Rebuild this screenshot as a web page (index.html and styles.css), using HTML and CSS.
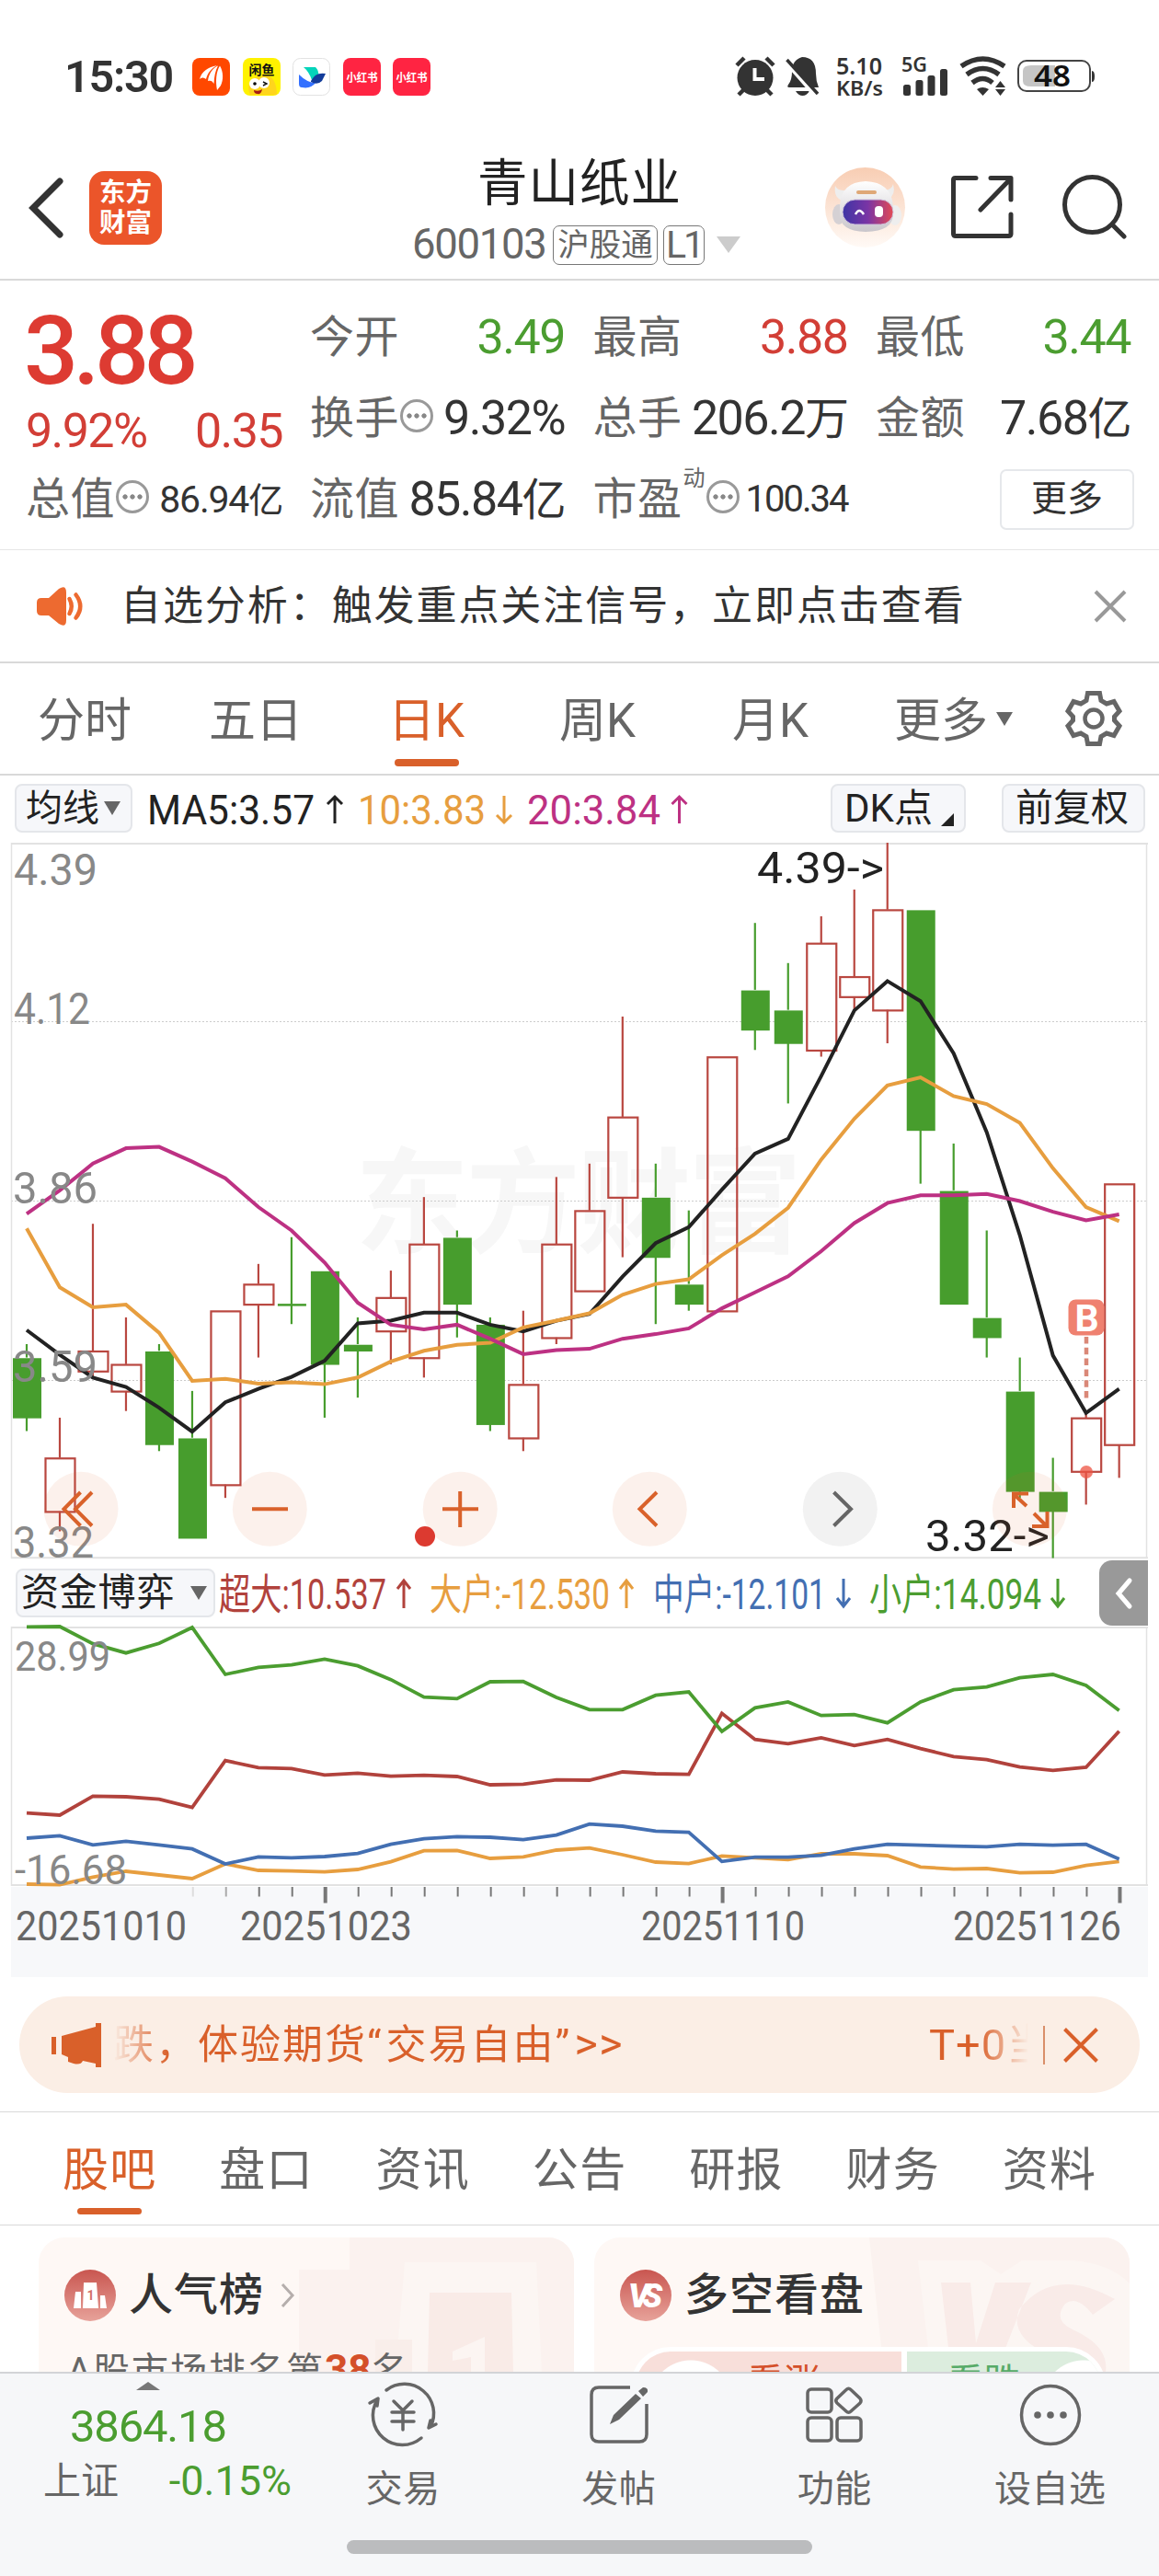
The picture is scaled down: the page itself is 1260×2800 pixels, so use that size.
FILE: index.html
```html
<!DOCTYPE html>
<html lang="zh-CN">
<head>
<meta charset="utf-8">
<title>青山纸业 600103</title>
<link rel="stylesheet" href="styles.css">
</head>
<body>
<div class="phone">

<header class="status">
  <span class="clock">15:30</span>
  <div class="apps">
    <svg class="app" viewBox="0 0 41 41"><rect width="41" height="41" rx="8" fill="#ff4800"/><path d="M8 23C10 15 17 10 27 8C20 12 17 16 15 23C12 21 10 21 8 23ZM17 25C18 17 22 11 28 8.500C25 14 24 20 23.500 28C22 25 20 24 17 25ZM27 35C25 25 26 15 30 8.500C34 15 34 24 31 30Z" fill="#fff"/></svg>
    <svg class="app" viewBox="0 0 41 41"><rect width="41" height="41" rx="8" fill="#fff200"/><path d="M8 40C3 27 10 20 22 20C29 17 37 23 37 40Z" fill="#ffd51d"/><circle cx="13" cy="28" r="6" fill="#fff"/><circle cx="23" cy="27" r="6" fill="#fff"/><circle cx="13" cy="28" r="1.8"/><path d="M22 26l4 2-4 2" fill="none" stroke="#111" stroke-width="1.4"/><path d="M12 35q5 2 9-1q-1 6-5 5q-4 0-4-4Z" fill="#a51b13"/><text x="20.5" y="18" text-anchor="middle" class="app-text" font-size="14" fill="#111">闲鱼</text></svg>
    <svg class="app" viewBox="0 0 41 41"><rect x=".5" y=".5" width="40" height="40" rx="8" fill="#fff" stroke="#e2e2e2"/><path d="M12 10H25Q29 14 28 19L21 24Q18 15 12 10Z" fill="#05d4ba"/><path d="M7 18Q16 27 25 27Q20 34 10 32Q7 32 7 28Z" fill="#3370ff"/><path d="M20 25Q25 15 36 17L32 25Q27 30 20 26Z" fill="#133c9a"/></svg>
    <svg class="app" viewBox="0 0 41 41"><rect width="41" height="41" rx="8" fill="#ff2442"/><text x="3.500" y="26" class="app-text" font-size="12.500" fill="#fff" textLength="34" lengthAdjust="spacingAndGlyphs">小红书</text></svg>
    <svg class="app" viewBox="0 0 41 41"><rect width="41" height="41" rx="8" fill="#ff2442"/><text x="3.500" y="26" class="app-text" font-size="12.500" fill="#fff" textLength="34" lengthAdjust="spacingAndGlyphs">小红书</text></svg>
  </div>
  <svg class="indicators" viewBox="798 60 394 48">
    <g fill="#333">
      <ellipse cx="821" cy="84.500" rx="19.500" ry="19.500"/>
      <path d="M801 71l8-8M841 71l-8-8M803 103l6-6M839 103l-6-6" stroke="#333" stroke-width="4.500"/>
      <path d="M820.500 74V86H831" fill="none" stroke="#fff" stroke-width="4"/>
      <path d="M858 95Q855 95 857 92Q861 87 861 78Q861 65 872 62Q887 62 887 80Q887 88 890 95Z"/>
      <path d="M865 99h15q-3 5-7.500 5t-7.500-5Z"/>
      <path d="M852 65L887 105" stroke="#fff" stroke-width="4"/>
      <path d="M855.500 65L889 102" stroke="#333" stroke-width="3.500"/>
      <rect x="982" y="92" width="8" height="12" rx="2.500"/><rect x="995.500" y="87" width="8" height="17" rx="2.500"/><rect x="1008.500" y="82" width="8" height="22" rx="2.500"/><rect x="1022" y="75" width="8" height="29" rx="2.500"/>
      <path d="M1062 97q6-4 13 0l-6.500 7ZM1082 95l5.500-7 5.500 7ZM1082 97l5.500 7 5.500-7Z"/>
      <path d="M1045 72q23.500-16 47 0M1051 81q17.500-13 35 0M1057 90q11.500-9 22 0" fill="none" stroke="#333" stroke-width="5.500"/>
      <rect x="1107" y="66" width="78" height="33" rx="9" fill="#fff" stroke="#444" stroke-width="2"/>
      <path d="M1121 71H1147V94H1121Q1112 94 1112 88V77Q1112 71 1121 71Z" fill="#c5c5c5"/>
      <path d="M1187 77q3 0 3 6t-3 6Z"/>
    </g>
    <g class="tiny" fill="#333">
      <text x="909" y="80.500" font-size="25" textLength="50" lengthAdjust="spacingAndGlyphs">5.10</text>
      <text x="909" y="104" font-size="22" textLength="51" lengthAdjust="spacingAndGlyphs">KB/s</text>
      <text x="980" y="78" font-size="21" textLength="28" lengthAdjust="spacingAndGlyphs">5G</text>
      <text x="1124" y="93.500" font-size="32" textLength="40" lengthAdjust="spacingAndGlyphs" fill="#111">48</text>
    </g>
  </svg>
</header>

<nav class="nav">
  <svg class="back" viewBox="0 0 38 66"><path d="M34 4L5 33L34 62" fill="none" stroke="#333" stroke-width="7" stroke-linecap="round"/></svg>
  <div class="logo"><span>东方</span><span>财富</span></div>
  <div class="title">
    <h1>青山纸业</h1>
    <div class="code"><span class="num">600103</span><span class="tag hgt">沪股通</span><span class="tag l1">L1</span><svg width="26" height="18" viewBox="0 0 26 18"><path d="M0 0H26L13 18Z" fill="#ccc"/></svg></div>
  </div>
  <svg class="robot" viewBox="0 0 87 87">
    <defs><linearGradient id="halo" x2="0" y2="1"><stop stop-color="#f8cdb3"/><stop offset="1" stop-color="#fffaf6"/></linearGradient><linearGradient id="visor"><stop stop-color="#3e35a5"/><stop offset=".5" stop-color="#7a35a5"/><stop offset="1" stop-color="#e24a55"/></linearGradient><linearGradient id="shell" x2="0" y2="1"><stop stop-color="#fff"/><stop offset="1" stop-color="#c9c6cb"/></linearGradient></defs>
    <circle cx="43.500" cy="43.500" r="43.500" fill="url(#halo)"/>
    <path d="M11 20Q9 33 19 36L26 24Q14 27 11 20ZM74 18Q77 30 69 34L62 24Q72 26 74 18Z" fill="#eee"/>
    <ellipse cx="15" cy="51" rx="7" ry="11" fill="#d5d1d4"/><ellipse cx="76" cy="52" rx="7" ry="11" fill="#eee"/>
    <path d="M16 42Q17 16 44 15Q72 16 74 42V50Q75 69 44 70Q15 69 16 50Z" fill="url(#shell)"/>
    <rect x="34" y="25" width="22" height="4" rx="2" fill="#dfa877"/>
    <rect x="19" y="35" width="55" height="27" rx="13.500" fill="url(#visor)" stroke="#cfc4dd"/>
    <path d="M33 51q4-8 9 0" fill="none" stroke="#fff" stroke-width="2.500"/><rect x="54" y="42" width="9" height="12" rx="4" fill="#fff"/>
  </svg>
  <svg class="share" viewBox="0 0 68 68"><path d="M27 2.500H4.500Q2.500 2.500 2.500 4.500V63Q2.500 65.500 5 65.500H62.500Q65 65.500 65 63V42M43 2.500H65V26M64 4L32 37" fill="none" stroke="#333" stroke-width="5" stroke-linecap="round" stroke-linejoin="round"/></svg>
  <svg class="search" viewBox="0 0 70 70"><circle cx="32.500" cy="32.500" r="30" fill="none" stroke="#333" stroke-width="5"/><path d="M54 54L67 67" stroke="#333" stroke-width="5" stroke-linecap="round"/></svg>
</nav>

<section class="quote">
  <div class="main-col">
    <div class="price">3.88</div>
    <div class="change"><span>9.92%</span><span>0.35</span></div>
    <div class="cell small"><b>总值</b><i class="info"></i><em>86.94<s>亿</s></em></div>
  </div>
  <div class="grid">
    <div class="cell"><b>今开</b><em class="down">3.49</em></div>
    <div class="cell"><b>最高</b><em class="up">3.88</em></div>
    <div class="cell"><b>最低</b><em class="down">3.44</em></div>
    <div class="cell"><b>换手</b><i class="info"></i><em>9.32%</em></div>
    <div class="cell"><b>总手</b><em>206.2<s>万</s></em></div>
    <div class="cell"><b>金额</b><em>7.68<s>亿</s></em></div>
    <div class="cell"><b>流值</b><em>85.84<s>亿</s></em></div>
    <div class="cell small pe"><b>市盈</b><sup>动</sup><i class="info"></i><em>100.34</em></div>
    <div class="cell"><button class="more">更多</button></div>
  </div>
</section>

<section class="notice">
  <svg class="speaker" viewBox="0 0 51 42"><path d="M5 12H13L24 2Q32-3 32 6V36Q32 45 24 40L13 31H5Q0 31 0 26V17Q0 12 5 12Z" fill="#ed6a30"/><path d="M35.500 13Q40 21 35.500 29M42.500 8.500Q52 21 42.500 33.500" fill="none" stroke="#ed6a30" stroke-width="4.500" stroke-linecap="round"/></svg>
  <p>自选分析：触发重点关注信号，立即点击查看</p>
  <svg class="close" viewBox="0 0 34 34"><path d="M1 1L33 33M33 1L1 33" stroke="#999" stroke-width="4"/></svg>
</section>

<nav class="periods">
  <a>分时</a><a>五日</a><a class="on">日K</a><a>周K</a><a>月K</a><a>更多<svg width="18" height="15" viewBox="0 0 18 15"><path d="M0 0H18L9 15Z" fill="#666"/></svg></a>
  <svg class="gear" viewBox="0 0 60 60"><path d="M23.500 2.500H36.500L38 10.500L44 14L52 11.500L58 22L52.500 28V32L58 38L52 48.500L44 46L38 49.500L36.500 57.500H23.500L22 49.500L16 46L8 48.500L2 38L7.500 32V28L2 22L8 11.500L16 14L22 10.500Z" fill="none" stroke="#666" stroke-width="5"/><circle cx="30" cy="30" r="9.500" fill="none" stroke="#666" stroke-width="4.500"/></svg>
</nav>

<section class="ma-row">
  <button class="chip avg">均线<svg width="18" height="15" viewBox="0 0 18 15"><path d="M0 0H18L9 15Z" fill="#666"/></svg></button>
  <svg class="ma-values" viewBox="160 843 600 73">
    <g class="num" font-size="44.500">
      <text x="160" y="896" textLength="182" fill="#222" lengthAdjust="spacingAndGlyphs">MA5:3.57</text>
      <text x="389" y="896" textLength="139" fill="#e79e3f" lengthAdjust="spacingAndGlyphs">10:3.83</text>
      <text x="573" y="896" textLength="145" fill="#bd3183" lengthAdjust="spacingAndGlyphs">20:3.84</text>
    </g>
    <g fill="none" stroke-width="3">
      <path d="M364 895V866M356 874l8-8 8 8" stroke="#222"/>
      <path d="M548 865V894M540 886l8 8 8-8" stroke="#e79e3f"/>
      <path d="M738.500 895V866M730.500 874l8-8 8 8" stroke="#bd3183"/>
    </g>
  </svg>
  <button class="chip dk">DK点<svg width="14" height="14" viewBox="0 0 14 14"><path d="M14 0V14H0Z" fill="#222"/></svg></button>
  <button class="chip fq">前复权</button>
</section>

<svg class="kline" viewBox="0 916 1260 778">
  <text x="386" y="1352" class="mark" font-size="124" textLength="486">东方财富</text>
  <g class="gridlines"><path d="M12 1110.500H1247M12 1305.500H1247M12 1500.500H1247"/></g>
  <path d="M12.500 916V1694M1246.500 916V1694" stroke="#e2e2e2" stroke-width="1.500"/>
  <path d="M12 917H1248M12 1693.300H1248" stroke="#e2e2e2" stroke-width="2"/>
  <g id="candles"></g>
  <g id="averages" fill="none" stroke-width="4"></g>
  <g class="num axis" font-size="49">
    <text x="15" y="962" textLength="91" lengthAdjust="spacingAndGlyphs">4.39</text>
    <text x="15" y="1112.500" textLength="83" lengthAdjust="spacingAndGlyphs">4.12</text>
    <text x="14" y="1307.500" textLength="92" lengthAdjust="spacingAndGlyphs">3.86</text>
    <text x="14" y="1501.500" textLength="92" lengthAdjust="spacingAndGlyphs">3.59</text>
    <text x="14" y="1692.500" textLength="88" lengthAdjust="spacingAndGlyphs">3.32</text>
  </g>
  <g class="num" font-size="48" fill="#222">
    <text x="823" y="959.500" textLength="138" lengthAdjust="spacingAndGlyphs">4.39-&gt;</text>
    <text x="1006" y="1686" textLength="135" lengthAdjust="spacingAndGlyphs">3.32-&gt;</text>
  </g>
  <rect x="1161.500" y="1412.500" width="39" height="39" rx="8" fill="#ef8170"/>
  <text x="1181.500" y="1447" text-anchor="middle" class="num" font-size="41" font-weight="700" fill="#fff">B</text>
  <path d="M1181 1453V1521" stroke="#da8878" stroke-width="4.500" stroke-dasharray="7.500 4.300"/>
  <circle cx="1181" cy="1600" r="7" fill="#ed5341" fill-opacity=".75"/>
  <g fill="#d9622b" fill-opacity=".09"><circle cx="88" cy="1640.300" r="40.500"/><circle cx="293.300" cy="1640.300" r="40.500"/><circle cx="500.200" cy="1640.300" r="40.500"/><circle cx="706.300" cy="1640.300" r="40.500"/><circle cx="1119.400" cy="1640.300" r="40.500"/></g>
  <circle cx="913.300" cy="1640.300" r="40.500" fill="#f2f2f2"/>
  <g fill="none" stroke="#d9622b" stroke-width="4">
    <path d="M87.500 1622L69.500 1640.300L87.500 1658.500M100 1622L82 1640.300L100 1658.500M274 1640.300H313M481 1640.300H520M500.200 1621V1660M714 1622L695.500 1640.300L714 1658.500"/>
    <path d="M1102 1639V1623.500H1118M1103 1625L1116 1637M1122 1659H1138.500V1643M1137 1658L1124 1645"/>
  </g>
  <path d="M906.500 1622L925 1640.300L906.500 1658.500" fill="none" stroke="#666" stroke-width="4"/>
  <circle cx="462" cy="1670" r="11" fill="#dc3a30"/>
</svg>

<section class="flow-row">
  <button class="chip game">资金博弈<svg width="18" height="15" viewBox="0 0 18 15"><path d="M0 0H18L9 15Z" fill="#666"/></svg></button>
  <svg class="flow-values" viewBox="236 1694 930 74">
    <g class="num" font-size="46">
      <text x="238" y="1748.500" textLength="182" lengthAdjust="spacingAndGlyphs" fill="#b1423c">超大:10.537</text>
      <text x="467" y="1748.500" textLength="196" lengthAdjust="spacingAndGlyphs" fill="#e79e3f">大户:-12.530</text>
      <text x="710" y="1748.500" textLength="188" lengthAdjust="spacingAndGlyphs" fill="#436fb2">中户:-12.101</text>
      <text x="945" y="1748.500" textLength="187" lengthAdjust="spacingAndGlyphs" fill="#4b9d30">小户:14.094</text>
    </g>
    <g fill="none" stroke-width="3">
      <path d="M439 1748V1718M432 1727l7-9 7 9" stroke="#b1423c"/>
      <path d="M681 1748V1718M674 1727l7-9 7 9" stroke="#e79e3f"/>
      <path d="M917 1716V1746M910 1737l7 9 7-9" stroke="#436fb2"/>
      <path d="M1150 1716V1746M1143 1737l7 9 7-9" stroke="#4b9d30"/>
    </g>
  </svg>
  <div class="collapse"><svg width="18" height="34" viewBox="0 0 18 34"><path d="M15 3L3 17L15 31" fill="none" stroke="#fff" stroke-width="5" stroke-linecap="round"/></svg></div>
</section>

<svg class="flow" viewBox="0 1768 1260 381">
  <rect x="12" y="2051" width="1236" height="98" fill="#f7f8fa"/>
  <path d="M12.500 1768V2050M1246.500 1768V2050" stroke="#e2e2e2" stroke-width="1.500"/>
  <path d="M12 1769H1248M12 2049H1248" stroke="#e2e2e2" stroke-width="2"/>
  <g id="ticks"></g>
  <g id="flows" fill="none" stroke-width="3.800"></g>
  <g class="num axis" font-size="45">
    <text x="16" y="1815.500" textLength="104" lengthAdjust="spacingAndGlyphs">28.99</text>
    <text x="16" y="2048" textLength="122" lengthAdjust="spacingAndGlyphs">-16.68</text>
  </g>
  <g class="num" font-size="45" fill="#666">
    <text x="17" y="2108.500" textLength="186" lengthAdjust="spacingAndGlyphs">20251010</text>
    <text x="261" y="2108.500" textLength="187" lengthAdjust="spacingAndGlyphs">20251023</text>
    <text x="697" y="2108.500" textLength="178" lengthAdjust="spacingAndGlyphs">20251110</text>
    <text x="1036" y="2108.500" textLength="183" lengthAdjust="spacingAndGlyphs">20251126</text>
  </g>
</svg>

<section class="banner">
  <svg class="horn" viewBox="0 0 54 48"><path d="M0 15H5V34H0ZM11 14L48 4V0H54V48H48V44L34 41Q32 46 24 44L18 42V37L11 34Z" fill="#d9602a"/></svg>
  <p class="ticker">跌，体验期货<q>“</q>交易自由<q>”</q><span class="go">&gt;&gt;</span></p>
  <p class="next">T+0当</p>
  <span class="bar"></span>
  <svg class="x" viewBox="0 0 38 38"><path d="M1.500 1.500L36.500 36.500M36.500 1.500L1.500 36.500" stroke="#d9602a" stroke-width="4"/></svg>
</section>

<nav class="subtabs"><a class="on">股吧</a><a>盘口</a><a>资讯</a><a>公告</a><a>研报</a><a>财务</a><a>资料</a></nav>

<section class="cards">
  <article class="card">
    <svg class="deco" viewBox="0 0 582 146"><path d="M283 35H338V0H582V146H283Z" fill="#fbf2ef"/><path d="M398 27H541L547 146H388Z" fill="#fcf6f3"/><path d="M425 60H514L516 146H423Z" fill="#f9ebe7"/><path d="M450 124L485 108V146H470V130L450 134Z" fill="#fcf5f2"/><path d="M366 111H406V146H366Z" fill="#f9eeea"/></svg>
    <header>
      <svg class="badge" viewBox="0 0 56 56"><defs><linearGradient id="rd" x2="0" y2="1"><stop stop-color="#c95650"/><stop offset="1" stop-color="#e7a29a"/></linearGradient></defs><circle cx="28" cy="28" r="28" fill="url(#rd)"/><path d="M12 24H18V42H10ZM21 14H35L37 42H20ZM39 28H44L46 42H39Z" fill="#fff"/><text x="28.500" y="33" text-anchor="middle" class="num" font-size="14" font-weight="700" fill="#d3716a">1</text></svg>
      <h2>人气榜</h2>
      <svg width="16" height="28" viewBox="0 0 16 28"><path d="M2 2L13 14L2 26" fill="none" stroke="#b5aeac" stroke-width="3"/></svg>
    </header>
    <p class="rank">A股市场排名第<strong>38</strong>名</p>
  </article>
  <article class="card">
    <svg class="deco" viewBox="0 0 582 146"><path d="M299 0H582V146H315Z" fill="#fbf2ef"/><path d="M352 25H420L442 40L465 25H520Q560 28 582 50V146H366Z" fill="#fcf6f3"/><path d="M377 49H409L415 115L436 49H475L437 146H388ZM566 67Q500 30 462 78Q450 110 500 130L520 146H556Q560 118 520 100Q498 90 512 72Q525 62 542 84Z" fill="#f9ebe8"/></svg>
    <header>
      <svg class="badge" viewBox="0 0 56 56"><circle cx="28" cy="28" r="28" fill="url(#rd)"/><text x="9" y="41" class="num vs" font-size="36" fill="#fff" textLength="37">VS</text></svg>
      <h2>多空看盘</h2>
    </header>
    <div class="vote"><span class="bull">看涨</span><span class="bear">看跌</span></div>
  </article>
</section>

<footer class="dock">
  <div class="index">
    <svg class="caret" width="26" height="9" viewBox="0 0 26 9"><path d="M0 9L13 0L26 9Z" fill="#777"/></svg>
    <div class="points">3864.18</div>
    <div class="sub"><span>上证</span><em>-0.15%</em></div>
  </div>
  <a><svg width="76" height="70" viewBox="0 0 76 70"><g fill="none" stroke="#666" stroke-width="3.500" stroke-linecap="round" stroke-linejoin="round"><path d="M20 8A32 32 0 0 1 68 48M74 45L66 49L68 41M58 60A32 32 0 0 1 10 19M2 22L11 17L10 25"/><path d="M28 20L38 30L48 20M38 30V51M26 32H50M26 42H50"/></g></svg>交易</a>
  <a><svg width="64" height="66" viewBox="0 0 64 66"><path d="M44 3H10Q2 3 2 11V54Q2 62 10 62H54Q62 62 62 54V21" fill="none" stroke="#666" stroke-width="3.500"/><path d="M22 43L26 33L50 10L56 15L32 38ZM53 7L58 3Q64 3 63 8L58 13Z" fill="#666"/></svg>发帖</a>
  <a><svg width="62" height="64" viewBox="0 0 62 64"><g fill="none" stroke="#666" stroke-width="3.500"><rect x="2" y="4" width="26" height="25" rx="4"/><rect x="2" y="35" width="26" height="25" rx="4"/><rect x="34" y="35" width="26" height="25" rx="4"/><path d="M44 4.500Q46.500 2 49 4.500L59 14Q61 16.500 59 19L49 28Q46.500 30.500 44 28L34 19Q31.500 16.500 34 14Z"/></g></svg>功能</a>
  <a><svg width="68" height="68" viewBox="0 0 68 68"><circle cx="34" cy="34" r="31.500" fill="none" stroke="#666" stroke-width="3.500"/><g fill="#666"><circle cx="20" cy="34" r="3.800"/><circle cx="34" cy="34" r="3.800"/><circle cx="48" cy="34" r="3.800"/></g></svg>设自选</a>
  <div class="home"></div>
</footer>

</div>
<script src="chart.js"></script>
</body>
</html>
```
FILE: styles.css
```css
* { box-sizing: border-box; }
body { margin: 0; background: #fff; }
.phone { width: 1260px; height: 2800px; overflow: hidden; display: flex; flex-direction: column; font-family: Roboto, "Noto Sans CJK SC", sans-serif; color: #333; line-height: 1; }
.phone > * { flex: none; }
svg { display: block; overflow: visible; }
p, h1, h2 { margin: 0; font-weight: 400; }
button { font: inherit; color: inherit; padding: 0; margin: 0; }
.num { font-family: Roboto, "Noto Sans CJK SC", sans-serif; }
.up { color: #d23e36; }
.down { color: #4b9d30; }

.status { height: 130px; padding: 60px 68px 0 70px; display: flex; align-items: flex-start; }
.clock { width: 139px; font-size: 48.500px; line-height: 48px; font-weight: 600; letter-spacing: -1.200px; white-space: nowrap; }
.apps { display: flex; gap: 13.600px; padding-top: 2.500px; width: 589px; }
.app { width: 41px; height: 41px; }
.app-text { font-family: "Noto Sans CJK SC", sans-serif; font-weight: 700; }
.indicators { width: 394px; height: 48px; flex: none; }
.tiny { font-family: "Noto Sans", sans-serif; font-weight: 600; }

.nav { height: 175px; border-bottom: 2px solid #d9d9d9; display: flex; align-items: flex-start; padding-left: 31px; }
.back { width: 38px; height: 66px; margin-top: 63px; }
.logo { width: 79px; height: 80px; margin: 56px 0 0 28px; border-radius: 16px; background: #eb552a; color: #fff; display: flex; flex-direction: column; align-items: center; justify-content: center; font-size: 28.500px; line-height: 33px; font-weight: 700; }
.title { width: 449px; margin-left: 239px; }
.title h1 { font-size: 54.500px; line-height: 60px; margin: 39px 0 0 104px; letter-spacing: 1px; color: #222; }
.code { display: flex; align-items: center; margin: 15px 0 0 33px; height: 44px; color: #666; font-size: 45.500px; }
.code .num { width: 153px; letter-spacing: -1.300px; }
.tag { height: 43px; border: 1.500px solid #777; border-radius: 7px; display: flex; align-items: center; justify-content: center; font-size: 34.500px; color: #666; }
.hgt { width: 114px; margin-right: 6px; }
.l1 { width: 45px; margin-right: 13px; font-size: 41px; letter-spacing: -3px; }
.robot { width: 87px; height: 87px; margin: 52px 0 0 33px; }
.share { width: 68px; height: 68px; margin: 61px 0 0 50px; }
.search { width: 70px; height: 70px; margin: 60px 0 0 53px; }

.quote { height: 293px; border-bottom: 1.500px solid #e6e6e6; display: flex; padding-left: 28px; }
.main-col { width: 279px; margin-right: 30px; }
.price { color: #dd3b32; font-size: 104px; font-weight: 500; line-height: 100px; height: 100px; margin: 27px 0 0 -2px; letter-spacing: -5.500px; }
.change { display: flex; justify-content: space-between; color: #d23e36; font-size: 52px; line-height: 60px; margin-top: 7px; letter-spacing: -1.600px; }
.grid { width: 892px; display: grid; grid-template-columns: repeat(3, 277px); column-gap: 30.500px; grid-template-rows: repeat(3, 88px); padding-top: 18px; }
.cell { display: flex; align-items: center; height: 88px; }
.cell b { font-weight: 400; font-size: 48px; color: #666; letter-spacing: 0.500px; line-height: 60px; white-space: nowrap; }
.cell em { font-style: normal; margin-left: auto; font-size: 52px; line-height: 60px; letter-spacing: -1.500px; white-space: nowrap; }
.cell s { text-decoration: none; font-size: 48px; }
.small em { font-size: 41px; letter-spacing: -1.200px; }
.small s { font-size: 38px; }
.pe em { font-size: 40px; letter-spacing: -2px; }
.cell sup { font-size: 24px; align-self: flex-start; color: #666; line-height: 24px; margin: 9px 0 0 1px; }
.info { width: 36px; height: 36px; border: 3px solid #999; border-radius: 50%; flex: none; margin-left: 1px; margin-top: -6px; display: block; background: radial-gradient(circle at 7px 15px, #888 2.300px, transparent 3px), radial-gradient(circle at 15px 15px, #888 2.300px, transparent 3px), radial-gradient(circle at 23px 15px, #888 2.300px, transparent 3px); }
.more { width: 146px; height: 66px; border: 2px solid #e6e8eb; border-radius: 7px; background: #fff; margin: -1px 0 0 135px; flex: none; font-size: 39px; color: #333; }

.notice { height: 123px; border-bottom: 2px solid #d9d9d9; display: flex; align-items: center; padding-left: 40px; }
.speaker { width: 51px; height: 42px; }
.notice p { width: 1059px; margin-left: 40px; font-size: 44px; letter-spacing: 1.930px; line-height: 60px; white-space: nowrap; }
.close { width: 34px; height: 34px; }

.periods { height: 122px; border-bottom: 2px solid #d9d9d9; display: grid; grid-template-columns: 186px 186px 186px 186px 186px 190px 60px; padding: 0 0 0 41px; color: #666; font-size: 51px; line-height: 126px; }
.periods a { white-space: nowrap; height: 120px; }
.periods a:nth-child(3) { padding-left: 9px; }
.periods a:nth-child(4) { padding-left: 9px; }
.periods a:nth-child(5) { padding-left: 11px; }
.periods a:nth-child(6) { padding-left: 1px; display: flex; gap: 9px; }
.periods a svg { margin-top: 53px; }
.periods .on { color: #d9602a; position: relative; }
.periods .on::after { content: ""; position: absolute; left: 16px; top: 104px; width: 70px; height: 8px; border-radius: 4px; background: #d9602a; }
.gear { width: 60px; height: 60px; margin: 30px 0 0 -2px; }

.ma-row { height: 73px; display: flex; align-items: flex-start; padding: 9px 0 0 16px; }
.chip { background: #f6f7fa; border: 2px solid #e4e6ea; border-radius: 8px; height: 53px; font-size: 41px; line-height: 49px; color: #222; display: flex; align-items: center; flex: none; white-space: nowrap; }
.avg { width: 128px; padding-left: 10px; gap: 5px; font-size: 40px; }
.ma-values { width: 600px; height: 73px; margin: -9px 143px 0 16px; flex: none; }
.dk { width: 147px; padding-left: 13px; gap: 9px; font-size: 42px; }
.dk svg { align-self: flex-end; margin-bottom: 5px; }
.fq { width: 156px; margin-left: 39px; padding-left: 13px; }

.kline { width: 1260px; height: 778px; }
.mark { font-family: "Noto Sans CJK SC", sans-serif; font-weight: 700; fill: #f7f7f7; }
.gridlines { stroke: #ccc; stroke-width: 1; stroke-dasharray: 2 2; }
.axis { fill: #888; }

.flow-row { height: 74px; display: flex; padding: 11px 0 0 17px; }
.game { width: 217px; padding-left: 4px; gap: 17px; letter-spacing: 0.800px; }
.flow-values { width: 930px; height: 74px; margin: -11px 0 0 2px; flex: none; }
.collapse { width: 53px; height: 71px; margin: -9px 0 0 29px; border-radius: 14px 0 0 14px; background: #999; display: flex; align-items: center; justify-content: center; }
.flow { width: 1260px; height: 381px; }

.banner { margin: 21px 21px 20px; height: 105px; border-radius: 53px; background: #fbeee5; display: flex; align-items: center; padding-left: 35px; color: #d9602a; font-size: 44px; line-height: 60px; }
.horn { width: 54px; height: 48px; }
.ticker { width: 875px; margin-left: 13px; letter-spacing: 2px; white-space: nowrap; background: linear-gradient(90deg, rgba(217,96,42,0), #d9602a 60px); -webkit-background-clip: text; background-clip: text; color: transparent; }
.ticker q { quotes: none; letter-spacing: 5px; }
.go { font-size: 49px; letter-spacing: 1px; }
.next { width: 108px; margin-left: 12px; font-size: 47px; letter-spacing: 1px; white-space: nowrap; overflow: hidden; background: linear-gradient(90deg, #d9602a 50%, rgba(217,96,42,0)); -webkit-background-clip: text; background-clip: text; color: transparent; }
.bar { width: 2px; height: 42px; background: #d98f6a; margin: 0 20px 0 16px; }
.x { width: 38px; height: 38px; }

.subtabs { height: 124px; border-top: 1.500px solid #d9d9d9; border-bottom: 1.500px solid #d9d9d9; display: flex; padding-left: 68px; font-size: 50px; color: #666; line-height: 127px; letter-spacing: 1.300px; }
.subtabs a { width: 170.500px; height: 122px; position: relative; }
.subtabs .on { color: #d9602a; }
.subtabs .on::after { content: ""; position: absolute; left: 15.500px; top: 104px; width: 70px; height: 7px; border-radius: 4px; background: #d9602a; }

.cards { height: 159px; padding: 13px 0 0 42px; display: flex; gap: 22px; overflow: hidden; }
.card { width: 582px; height: 320px; border-radius: 28px; background: #fef8f5; overflow: hidden; position: relative; }
.deco { position: absolute; left: 0; top: 0; width: 582px; height: 146px; }
.card header { position: relative; display: flex; align-items: center; height: 56px; margin: 35px 0 0 28px; }
.badge { width: 56px; height: 56px; margin-right: 14px; }
.card h2 { font-size: 48px; font-weight: 500; letter-spacing: 1px; line-height: 60px; margin-right: 18px; white-space: nowrap; }
.vs { font-weight: 900; font-style: italic; }
.rank { position: relative; margin: 23px 0 0 31px; font-size: 40px; line-height: 60px; letter-spacing: 2px; color: #666; white-space: nowrap; }
.rank strong { color: #d4502a; font-size: 44px; letter-spacing: 0; }
.vote { position: relative; width: 516px; height: 86px; margin: 28px 0 0 40px; border: 5px solid #fff; border-radius: 45px; display: flex; gap: 6px; overflow: hidden; background: #fff; font-size: 40px; line-height: 60px; }
.bull { flex: 1; padding: 4px 0 0 121px; color: #d4502a; background: radial-gradient(circle at 60px 54px, #fff 44px, transparent 45px) #f8dfda; }
.bear { flex: 1; padding: 4px 0 0 44px; color: #57ab68; background: radial-gradient(circle at 192px 54px, #fff 44px, transparent 45px) #dcedde; }

.dock { height: 222px; background: #f6f7f9; border-top: 2px solid #d2d4d7; display: grid; grid-template-columns: 321px 234.500px 234.500px 234.500px 234.500px; position: relative; color: #666; font-size: 40px; }
.dock a { display: flex; flex-direction: column; align-items: center; line-height: 48px; letter-spacing: 0.500px; white-space: nowrap; }
.dock a svg { height: 70px; margin: 10px 0 22px; }
.index { padding-left: 47px; }
.caret { margin: 9px 0 0 101px; }
.points { color: #4b9d30; font-size: 49px; line-height: 52px; margin: 14px 0 0 29px; letter-spacing: -1.200px; }
.sub { display: flex; justify-content: space-between; width: 270px; font-size: 41px; line-height: 52px; margin-top: 7px; }
.sub em { font-style: normal; color: #4b9d30; font-size: 45px; letter-spacing: 0; }
.home { position: absolute; left: 377px; top: 181px; width: 506px; height: 15px; border-radius: 8px; background: #bbbcbe; }
```
FILE: chart.js
```js
const NS = 'http://www.w3.org/2000/svg';
const N = 34;
const x = i => 29 + i * 35.99;
const y = p => 916 + (4.39 - p) * 726.7;

function add(parent, tag, attrs) {
  const el = document.createElementNS(NS, tag);
  for (const k in attrs) el.setAttribute(k, attrs[k]);
  document.getElementById(parent).appendChild(el);
}

// [rising, body top, body bottom, high, low]
const days = [
  [0,3.62,3.53,3.64,3.51],[1,3.47,3.39,3.53,3.36],[1,3.63,3.60,3.82,3.59],[1,3.61,3.57,3.68,3.54],
  [0,3.63,3.49,3.64,3.48],[0,3.50,3.35,3.57,3.35],[1,3.69,3.43,3.69,3.41],[1,3.73,3.70,3.76,3.62],
  [0,3.70,3.70,3.80,3.67],[0,3.75,3.61,3.75,3.53],[0,3.64,3.63,3.68,3.56],[1,3.71,3.66,3.75,3.61],
  [1,3.79,3.62,3.86,3.59],[0,3.80,3.70,3.81,3.65],[0,3.67,3.52,3.68,3.51],[1,3.58,3.50,3.69,3.48],
  [1,3.79,3.65,3.89,3.64],[1,3.84,3.72,3.91,3.72],[1,3.98,3.86,4.13,3.77],[0,3.86,3.77,3.91,3.67],
  [0,3.73,3.70,3.84,3.69],[1,4.07,3.69,4.07,3.69],[0,4.17,4.11,4.27,4.08],[0,4.14,4.09,4.21,4.00],
  [1,4.24,4.08,4.28,4.07],[1,4.19,4.16,4.32,4.14],[1,4.29,4.14,4.39,4.09],[0,4.29,3.96,4.29,3.88],
  [0,3.87,3.70,3.94,3.70],[0,3.68,3.65,3.81,3.62],[0,3.57,3.42,3.62,3.41],[0,3.42,3.39,3.47,3.32],
  [1,3.53,3.45,3.54,3.40],[1,3.88,3.49,3.88,3.44]
];

days.forEach(([rise, top, bottom, high, low], i) => {
  const cx = x(i), color = rise ? '#b94740' : '#479d2d';
  const line = (a, b) => add('candles', 'path', { d: `M${cx} ${y(a)}V${y(b)}`, stroke: color, 'stroke-width': 2.2 });
  line(high, top);
  line(bottom, low);
  if (rise) {
    add('candles', 'rect', { x: cx - 15.5, y: y(top) + 0.7, width: 32, height: y(bottom) - y(top), fill: 'none', stroke: color, 'stroke-width': 2.2 });
  } else {
    add('candles', 'rect', { x: cx - 15, y: y(top) - (top === bottom ? 1 : 0) + 0.7, width: 31, height: Math.max(2.5, y(bottom) - y(top)), fill: color });
  }
});

const closes = days.map(d => d[0] ? d[1] : d[2]);
function average(span, lead, color) {
  const pts = closes.map((_, i) => {
    const v = i < lead.length ? lead[i] : closes.slice(i - span + 1, i + 1).reduce((a, b) => a + b) / span;
    return x(i) + ',' + (y(v) + 0.7);
  });
  add('averages', 'polyline', { points: pts.join(' '), stroke: color });
}
average(5, [3.662,3.625,3.591,3.577], '#222');
average(10, [3.814,3.726,3.696,3.700,3.658,3.586,3.589,3.582,3.584], '#e79e3f');
average(20, [3.836,3.871,3.911,3.934,3.936,3.914,3.889,3.846,3.811,3.763,3.703,3.670,3.663,3.670,3.649,3.626,3.632,3.634,3.649], '#bd3183');

// fund flow series, in thirds of a pixel below y = 1690
const flows = {
  '#e79e3f': [1074,1076,1051,1032,1044,1056,1008,1029,1031,1034,1026,1001,965,964,990,985,963,956,978,1002,1007,982,988,994,975,975,981,1018,1025,1023,1037,1035,1013,1000],
  '#436fb2': [924,916,946,934,946,959,1008,985,988,984,974,944,926,919,921,929,914,878,885,901,905,1000,986,986,980,959,944,947,950,952,944,947,944,992],
  '#b1423c': [842,849,787,789,797,824,671,694,697,718,712,722,719,723,750,748,734,735,708,714,716,517,602,616,597,622,602,632,658,668,692,703,693,575],
  '#4b9d30': [235,234,290,320,289,237,390,367,359,340,362,407,464,469,414,413,465,505,505,458,447,576,499,480,524,521,548,480,440,431,401,390,426,508]
};
for (const color in flows) {
  add('flows', 'polyline', { points: flows[color].map((v, i) => x(i) + ',' + (1690 + v / 3)).join(' '), stroke: color });
}

for (let i = 5; i < N; i++) {
  const major = i % 12 === 9;
  add('ticks', 'path', { d: `M${x(i) + 0.8} 2051V${major ? 2068.5 : 2061.5}`, stroke: i === 5 ? '#ddd' : i === 6 ? '#aaa' : '#777', 'stroke-width': major ? 4 : 2 });
}
```
